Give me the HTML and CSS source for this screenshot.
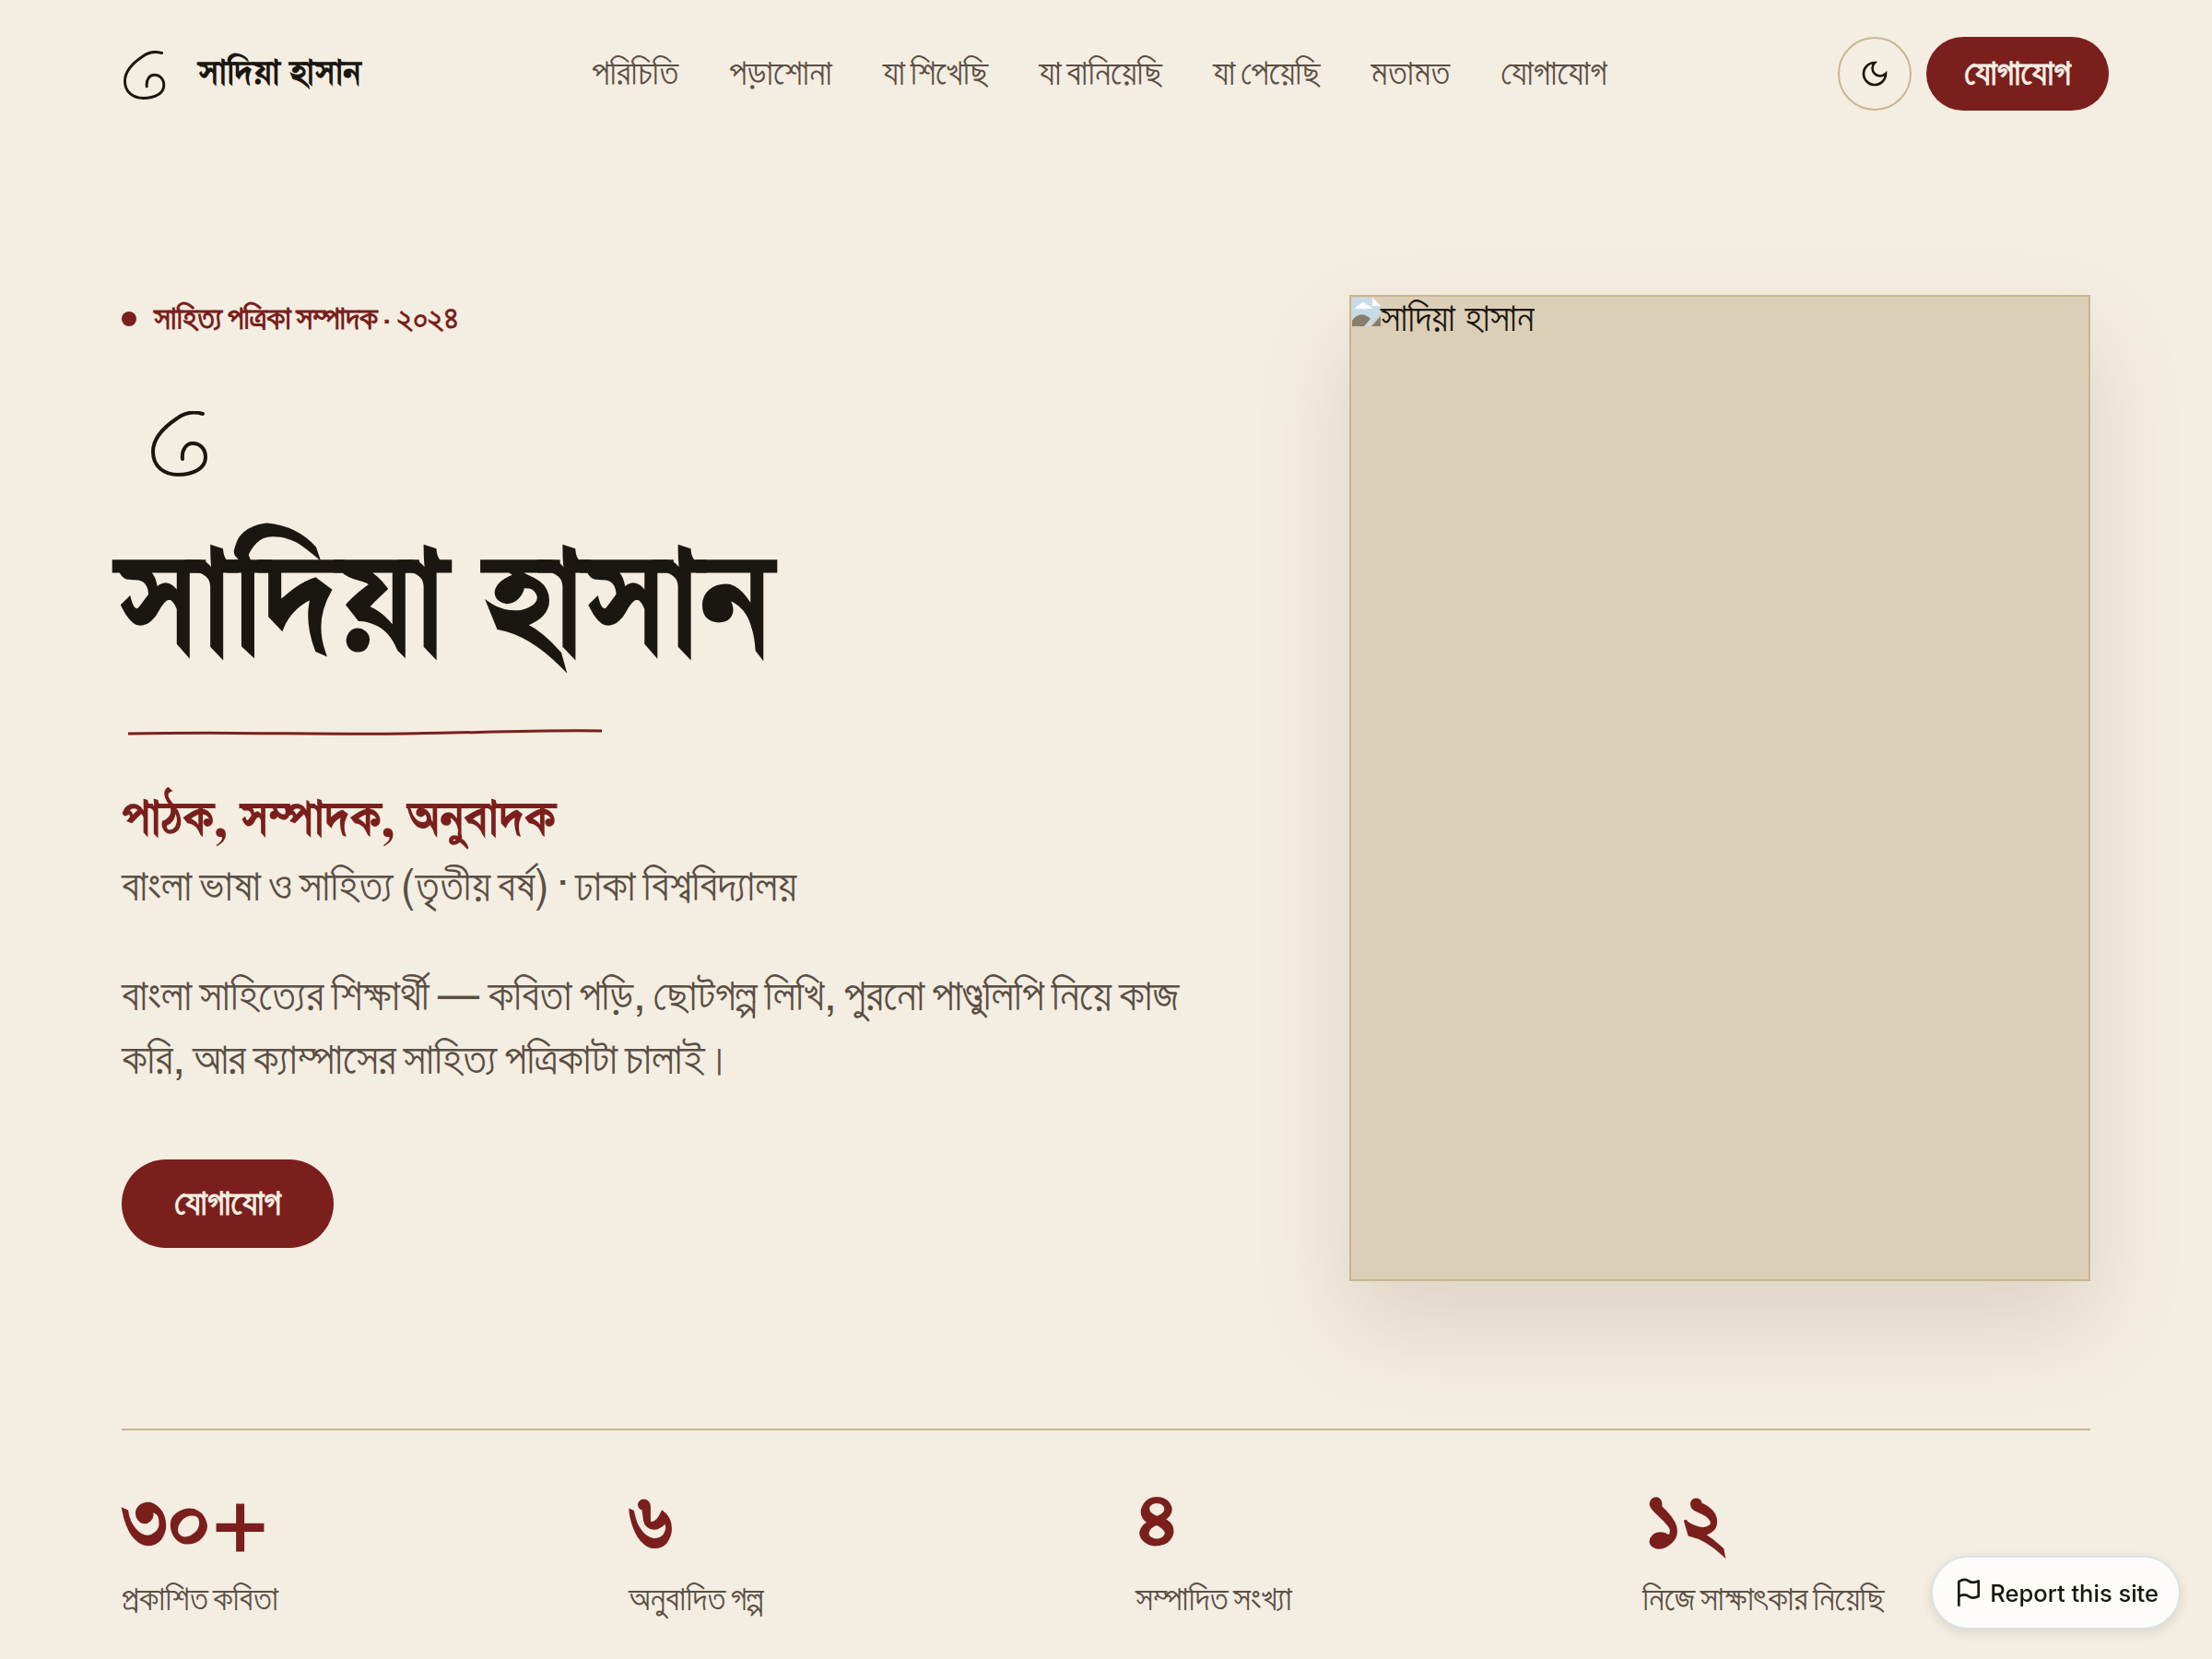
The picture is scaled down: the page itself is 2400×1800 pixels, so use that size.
FILE: index.html
```html
<!DOCTYPE html>
<html lang="bn">
<head>
    <meta charset="UTF-8">
    <title>সাদিয়া হাসান</title>
    <link rel="stylesheet" href="styles.css">
</head>
<body>
    <header class="nav">
        <a class="brand" href="#">
            <svg class="sign sign-small" viewBox="0 0 62 72" aria-hidden="true">
                <path d="M56 3C46 0 36 2 28 8C10 20 2 32 2 44C2 60 14 69 29 69C46 69 59 62 59 50C59 40 52 35 45 35C38 35 33 42 34 52"/>
            </svg>
            <span class="brand-name">সাদিয়া হাসান</span>
        </a>
        <nav class="nav-links">
            <a href="#">পরিচিতি</a>
            <a href="#">পড়াশোনা</a>
            <a href="#">যা শিখেছি</a>
            <a href="#">যা বানিয়েছি</a>
            <a href="#">যা পেয়েছি</a>
            <a href="#">মতামত</a>
            <a href="#">যোগাযোগ</a>
        </nav>
        <div class="nav-actions">
            <button class="theme-toggle" aria-label="theme">
                <svg viewBox="0 0 24 24" width="32" height="32" aria-hidden="true">
                    <path d="M12 3a6 6 0 0 0 9 9 9 9 0 1 1-9-9Z"/>
                </svg>
            </button>
            <a class="btn btn-nav" href="#">যোগাযোগ</a>
        </div>
    </header>

    <main class="page">
        <section class="hero">
            <div class="hero-text">
                <p class="eyebrow"><span class="dot"></span>সাহিত্য পত্রিকা সম্পাদক · ২০২৪</p>
                <svg class="sign sign-large" viewBox="0 0 62 72" aria-hidden="true">
                    <path d="M56 3C46 0 36 2 28 8C10 20 2 32 2 44C2 60 14 69 29 69C46 69 59 62 59 50C59 40 52 35 45 35C38 35 33 42 34 52"/>
                </svg>
                <h1>সাদিয়া হাসান</h1>
                <svg class="underline" viewBox="0 0 516 8" aria-hidden="true">
                    <path d="M1 6C120 4 200 7 300 6C380 5 440 2 515 3"/>
                </svg>
                <h2>পাঠক, সম্পাদক, অনুবাদক</h2>
                <p class="study">বাংলা ভাষা ও সাহিত্য (তৃতীয় বর্ষ) · ঢাকা বিশ্ববিদ্যালয়</p>
                <p class="bio">বাংলা সাহিত্যের শিক্ষার্থী — কবিতা পড়ি, ছোটগল্প লিখি, পুরনো পাণ্ডুলিপি নিয়ে কাজ করি, আর ক্যাম্পাসের সাহিত্য পত্রিকাটা চালাই।</p>
                <a class="btn btn-hero" href="#">যোগাযোগ</a>
            </div>
            <div class="portrait">
                <svg class="broken" viewBox="0 0 31 31" aria-hidden="true">
                    <path class="broken-sheet" d="M0 0H22L31 9V17L18 31H0Z"/>
                    <path class="broken-fold" d="M22 0L31 9H22Z"/>
                    <path class="broken-cloud" d="M3 12C5 10 5 8 9 7C11 3 15 5 16 8C19 8 21 10 22 12Z"/>
                    <path class="broken-hill" d="M0 31V25C5 17 13 16 20 23L13 31Z"/>
                    <path class="broken-hill" d="M21 31L31 20V31Z"/>
                </svg>
                <span>সাদিয়া হাসান</span>
            </div>
        </section>

        <section class="stats">
            <div class="stat"><div class="stat-num">৩০+</div><div class="stat-label">প্রকাশিত কবিতা</div></div>
            <div class="stat"><div class="stat-num">৬</div><div class="stat-label">অনুবাদিত গল্প</div></div>
            <div class="stat"><div class="stat-num">৪</div><div class="stat-label">সম্পাদিত সংখ্যা</div></div>
            <div class="stat"><div class="stat-num">১২</div><div class="stat-label">নিজে সাক্ষাৎকার নিয়েছি</div></div>
        </section>
    </main>

    <a class="report" href="#">
        <svg viewBox="0 0 24 24" width="32" height="32" aria-hidden="true">
            <path d="M4 23V3C7 1 10 1 12 2.500C14 4 17 4 20 2.500V15C17 16.500 14 16.500 12 15C10 13.500 7 13.500 4 15"/>
        </svg>
        Report this site
    </a>
</body>
</html>
```

FILE: styles.css
```css
* {
    box-sizing: border-box;
}
html, body {
    margin: 0;
    padding: 0;
}
body {
    background-color: #f4ede1;
    color: #1a1610;
    font-family: FreeSans, "Liberation Sans", sans-serif;
    word-spacing: -4px;
    height: 1800px;
    overflow: hidden;
}
a {
    color: inherit;
    text-decoration: none;
}
.nav {
    display: flex;
    align-items: center;
    justify-content: space-between;
    height: 160px;
    padding: 0 112px 0 132px;
}
.brand {
    display: flex;
    align-items: center;
    gap: 35px;
}
.sign {
    fill: none;
    stroke: #1a1610;
    stroke-width: 4;
    stroke-linecap: round;
}
.sign-small {
    width: 46px;
    height: 54px;
    margin: 4px 0 0 2px;
}
.brand-name {
    font-family: FreeSerif, "Liberation Serif", serif;
    font-size: 43px;
    font-weight: 700;
    word-spacing: 0;
}
.nav-links {
    display: flex;
    gap: 55px;
    font-size: 39px;
    color: #5a4f45;
}
.nav-actions {
    display: flex;
    align-items: center;
    gap: 16px;
}
.theme-toggle {
    display: flex;
    align-items: center;
    justify-content: center;
    width: 80px;
    height: 80px;
    border: 2px solid #c8b592;
    border-radius: 50%;
    background: none;
    padding: 0;
}
.theme-toggle svg {
    fill: none;
    stroke: #1a1610;
    stroke-width: 2;
}
.btn {
    display: inline-flex;
    align-items: center;
    justify-content: center;
    background-color: #7a1f1c;
    color: #f4ede1;
    border-radius: 999px;
    font-weight: 700;
}
.btn-nav {
    width: 198px;
    height: 80px;
    font-size: 39px;
}
.btn-hero {
    width: 230px;
    height: 96px;
    margin-top: 72px;
    font-size: 39px;
}
.page {
    padding: 0 132px;
}
.hero {
    display: flex;
    justify-content: space-between;
    padding-top: 160px;
}
.hero-text {
    width: 1180px;
}
.eyebrow {
    display: flex;
    align-items: center;
    gap: 19px;
    margin: 0;
    height: 50px;
    padding-top: 2px;
    font-size: 35px;
    font-weight: 700;
    color: #7a1f1c;
}
.dot {
    width: 16px;
    height: 16px;
    border-radius: 50%;
    background-color: #7a1f1c;
}
.sign-large {
    display: block;
    width: 62px;
    height: 72px;
    margin: 76px 0 0 32px;
}
h1 {
    margin: 58px 0 0 -5px;
    font-family: FreeSerif, "Liberation Serif", serif;
    font-size: 173px;
    line-height: 170px;
    font-weight: 700;
    word-spacing: 0;
    white-space: nowrap;
}
.underline {
    display: block;
    width: 516px;
    height: 8px;
    margin: 44px 0 0 6px;
    fill: none;
    stroke: #7a1f1c;
    stroke-width: 3;
}
h2 {
    margin: 63px 0 0;
    font-family: FreeSerif, "Liberation Serif", serif;
    font-size: 58.500px;
    line-height: 60px;
    font-weight: 700;
    word-spacing: 0;
    color: #7a1f1c;
}
.study {
    margin: 12px 0 0;
    font-size: 48px;
    line-height: 60px;
    color: #5a4f45;
}
.bio {
    margin: 55px 0 0;
    font-size: 48px;
    line-height: 69px;
    color: #5a4f45;
}
.portrait {
    display: flex;
    align-items: flex-start;
    width: 804px;
    height: 1070px;
    border: 2px solid #c8b592;
    background-color: #dccfb7;
    box-shadow: 0 48px 96px rgba(90, 70, 40, 0.15);
    font-size: 42px;
    line-height: 48px;
    word-spacing: 0;
}
.broken {
    width: 31px;
    height: 31px;
    margin: 1px 0 0 1px;
}
.broken-sheet {
    fill: #c6dbe8;
}
.broken-fold {
    fill: #ffffff;
}
.broken-cloud {
    fill: #ffffff;
}
.broken-hill {
    fill: #857f6c;
}
.stats {
    display: grid;
    grid-template-columns: repeat(4, 1fr);
    gap: 64px;
    margin-top: 160px;
    border-top: 2px solid #c8b592;
    padding-top: 52px;
}
.stat-num {
    margin-left: 2px;
    font-family: FreeSerif, "Liberation Serif", serif;
    font-size: 94px;
    line-height: 100px;
    font-weight: 700;
    color: #7a1f1c;
}
.stat-label {
    margin-top: 10px;
    font-size: 37.500px;
    line-height: 44px;
    color: #5a4f45;
}
.report {
    position: fixed;
    right: 34px;
    bottom: 32px;
    display: flex;
    align-items: center;
    gap: 7px;
    height: 80px;
    padding: 0 22px 0 23px;
    border: 2px solid #d9e2e6;
    border-radius: 999px;
    background-color: #fdfcf9;
    box-shadow: 0 4px 12px rgba(60, 50, 30, 0.12);
    font-family: Inter, sans-serif;
    font-size: 25.500px;
    font-weight: 500;
    word-spacing: 0;
    color: #1a1610;
}
.report svg {
    fill: none;
    stroke: #1a1610;
    stroke-width: 2;
    stroke-linejoin: round;
}
```
